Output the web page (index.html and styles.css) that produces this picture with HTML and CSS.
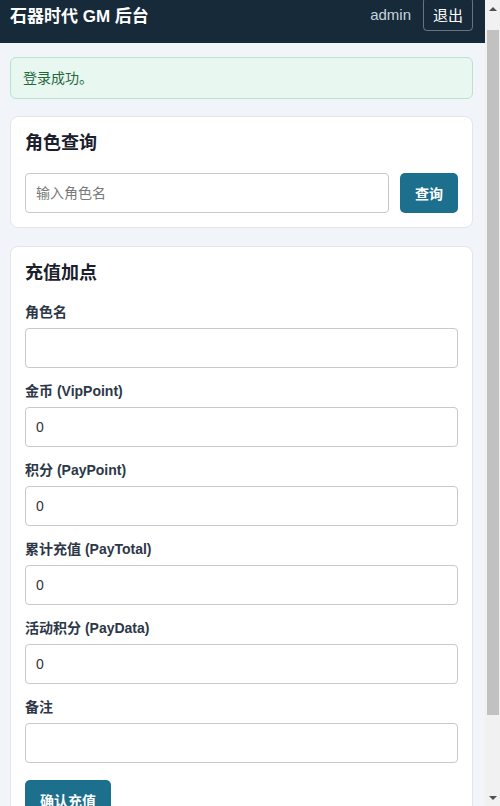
FILE: index.html
```html
<!DOCTYPE html>
<html lang="zh-CN">
<head>
    <meta charset="UTF-8">
    <meta name="viewport" content="width=device-width, initial-scale=1.0">
    <title>石器时代 GM 后台</title>
    <link rel="stylesheet" href="styles.css">
</head>
<body>
    <div class="topbar">
        <div class="brand">石器时代 GM 后台</div>
        <div class="user">
            <span class="username">admin</span>
            <button class="btn-logout">退出</button>
        </div>
    </div>

    <div class="container">
        <div class="alert alert-success">登录成功。</div>

        <div class="card">
            <h2>角色查询</h2>
            <form class="search-row" onsubmit="return false">
                <input type="text" placeholder="输入角色名">
                <button class="btn btn-primary">查询</button>
            </form>
        </div>

        <div class="card">
            <h2>充值加点</h2>
            <form onsubmit="return false">
                <div class="field">
                    <label>角色名</label>
                    <input type="text">
                </div>
                <div class="field">
                    <label>金币 (VipPoint)</label>
                    <input type="number" value="0">
                </div>
                <div class="field">
                    <label>积分 (PayPoint)</label>
                    <input type="number" value="0">
                </div>
                <div class="field">
                    <label>累计充值 (PayTotal)</label>
                    <input type="number" value="0">
                </div>
                <div class="field">
                    <label>活动积分 (PayData)</label>
                    <input type="number" value="0">
                </div>
                <div class="field">
                    <label>备注</label>
                    <input type="text">
                </div>
                <button class="btn btn-primary">确认充值</button>
            </form>
        </div>
    </div>

    <!-- classic window scrollbar, as in the capture -->
    <div class="scrollbar">
        <span class="arrow arrow-up"></span>
        <div class="track"><div class="thumb"></div></div>
        <span class="arrow arrow-down"></span>
    </div>

    <script>
        // page was captured slightly scrolled
        window.scrollTo(0, 15);
    </script>
</body>
</html>
```

FILE: styles.css
```css
* {
    margin: 0;
    padding: 0;
    box-sizing: border-box;
    font-family: "Liberation Sans", Arial, "Noto Sans CJK SC", sans-serif;
}

body {
    background: #f1f4f8;
    color: #1f2937;
    padding-right: 15px;
}

.topbar {
    display: flex;
    justify-content: space-between;
    align-items: center;
    height: 58px;
    padding: 0 12px 0 10px;
    background: #172a3a;
    color: white;
}

.brand {
    font-size: 17px;
    font-weight: bold;
}

.user {
    display: flex;
    align-items: center;
    gap: 12px;
}

.username {
    font-size: 15px;
    color: #c9d3dd;
}

.btn-logout {
    height: 34px;
    padding: 0 9px;
    background: transparent;
    border: 1px solid rgba(255, 255, 255, 0.35);
    border-radius: 4px;
    color: white;
    font-size: 15px;
    cursor: pointer;
}

.container {
    padding: 14px 12px 14px 10px;
}

.alert {
    padding: 11px 12px;
    border-radius: 6px;
    font-size: 14px;
    line-height: 18px;
    margin-bottom: 17px;
}

.alert-success {
    background: #e8f7ef;
    border: 1px solid #b9e3cc;
    color: #23673f;
}

.card {
    background: white;
    border: 1px solid #e1e6ec;
    border-radius: 8px;
    padding: 14px;
    margin-bottom: 18px;
}

.card h2 {
    font-size: 18px;
    line-height: 24px;
    color: #1a202c;
    margin-bottom: 18px;
}

.search-row {
    display: flex;
    gap: 11px;
}

.search-row input {
    flex: 1;
}

input {
    width: 100%;
    height: 40px;
    padding: 0 10px;
    border: 1px solid #c9c9c9;
    border-radius: 4px;
    font-size: 14px;
    color: #333;
    outline: none;
}

input::placeholder {
    color: #7a7a7a;
}

input[type=number]::-webkit-inner-spin-button {
    -webkit-appearance: none;
}

.field {
    margin-bottom: 14px;
}

.field label {
    display: block;
    font-size: 14px;
    line-height: 18px;
    font-weight: bold;
    color: #2d3748;
    margin-bottom: 7px;
}

.field:last-of-type {
    margin-bottom: 17px;
}

.btn {
    height: 40px;
    padding: 0 15px;
    border: none;
    border-radius: 5px;
    font-size: 14px;
    font-weight: bold;
    cursor: pointer;
}

.btn-primary {
    background: #1d6f8e;
    color: white;
}

.scrollbar {
    position: fixed;
    top: 0;
    right: 0;
    width: 15px;
    height: 100vh;
    display: flex;
    flex-direction: column;
    background: #f1f1f1;
}

.track {
    flex: 1;
    padding: 13px 1px 0 2px;
}

.thumb {
    height: 685px;
    background: #c1c1c1;
}

.arrow {
    height: 17px;
    display: flex;
    justify-content: center;
    align-items: center;
}

.arrow::before {
    content: "";
    border-left: 4px solid transparent;
    border-right: 4px solid transparent;
}

.arrow-up::before {
    border-bottom: 4px solid #505050;
}

.arrow-down::before {
    border-top: 4px solid #505050;
}
```
